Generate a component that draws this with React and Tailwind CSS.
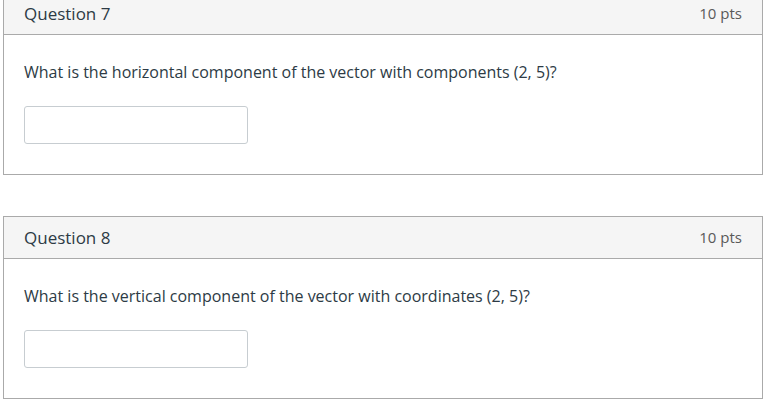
import React from 'react';

const questions = [
  { id: 7, text: 'What is the horizontal component of the vector with components (2, 5)?' },
  { id: 8, text: 'What is the vertical component of the vector with coordinates (2, 5)?' },
];

const QuestionCard = ({ q }) => (
  <div className="border border-[#aaaaaa] bg-white">
    <div className="flex items-center justify-between h-[42px] px-5 bg-[#f5f5f5] border-b border-[#aaaaaa]">
      <span className="text-[17px] text-[#2d3b45]">Question {q.id}</span>
      <span className="text-[15px] text-[#595959]">10 pts</span>
    </div>
    <div className="px-5 pt-[25px] pb-[30px]">
      <p className="text-[16px] leading-[24px] text-[#2d3b45]">{q.text}</p>
      <input
        type="text"
        className="block mt-[22px] w-[224px] h-[38px] border border-[#c7cdd1] rounded-[3px] bg-white"
      />
    </div>
  </div>
);

export default function App() {
  return (
    <div className="min-h-screen bg-white pl-[3px] pr-[2px] font-['Open_Sans',sans-serif]">
      <div className="flex flex-col gap-[41px] -mt-[8px]">
        {questions.map((q) => (
          <QuestionCard key={q.id} q={q} />
        ))}
      </div>
    </div>
  );
}
